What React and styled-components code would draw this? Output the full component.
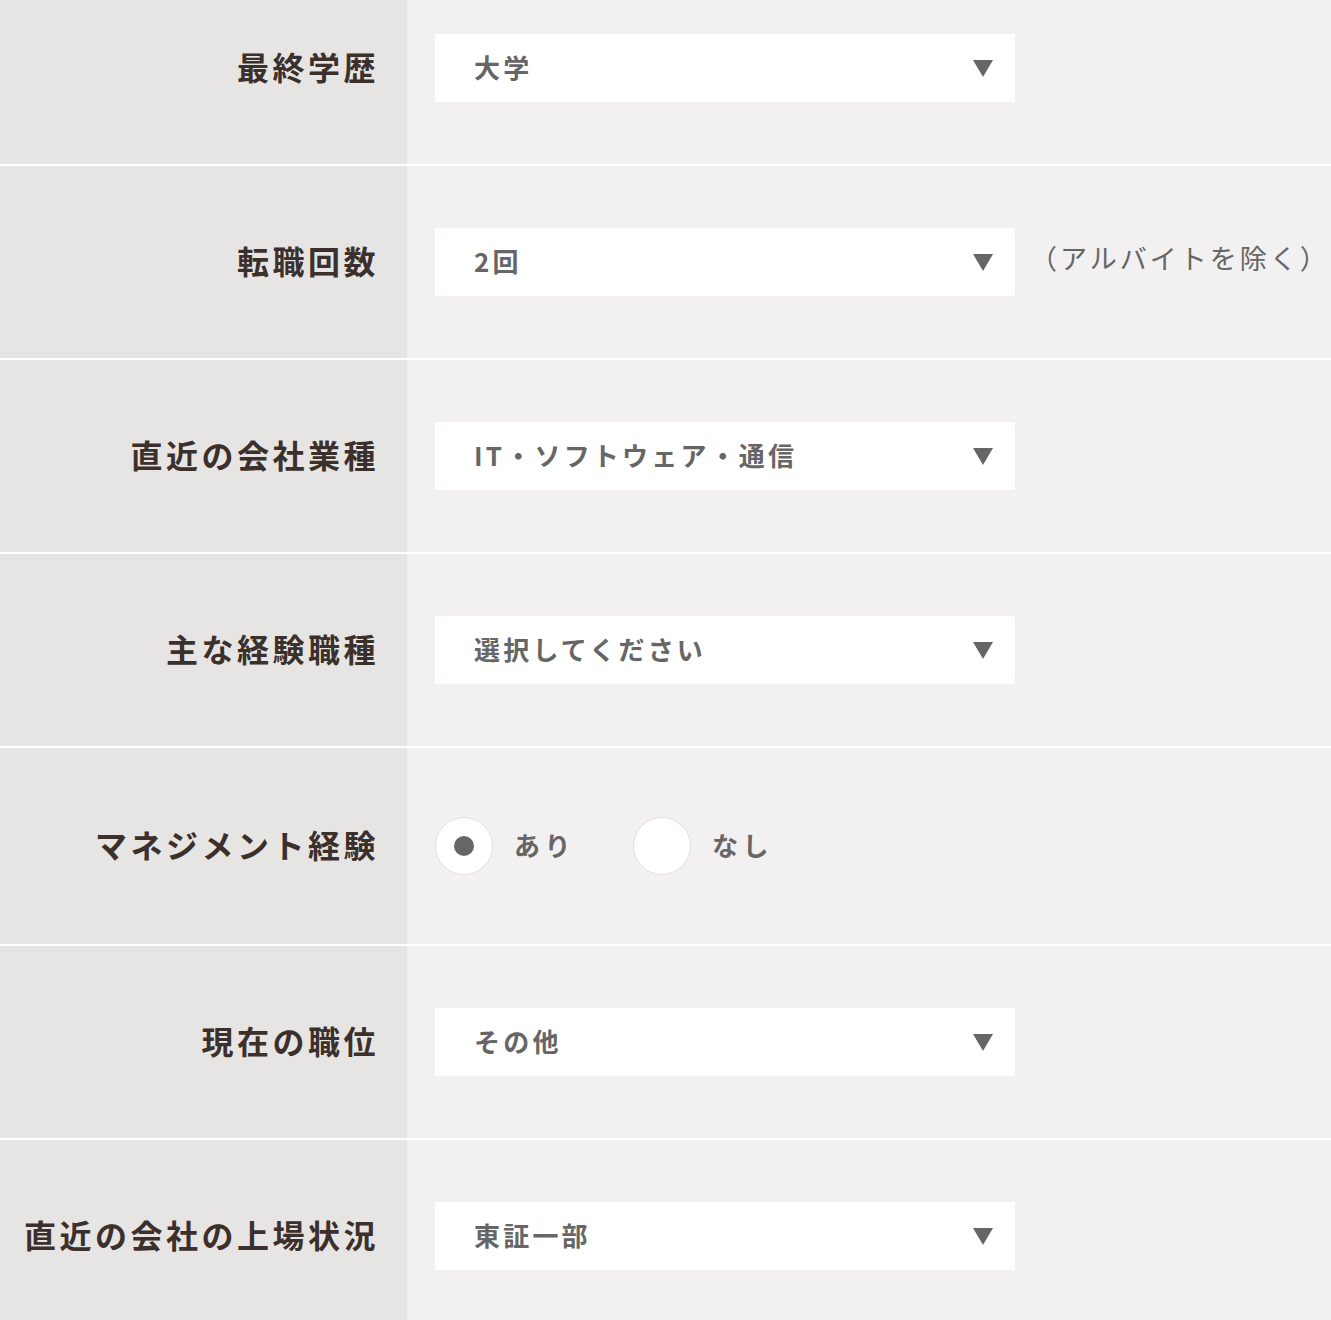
import React, { useState } from 'react'
import styled, { createGlobalStyle } from 'styled-components'

const GlobalStyle = createGlobalStyle`
  html, body {
    margin: 0;
    padding: 0;
    background: #f2f0f0;
    font-family: "Noto Sans CJK JP", "Noto Sans", sans-serif;
  }
`

const rows = [
  { label: '最終学歴', value: '大学', first: true },
  { label: '転職回数', value: '2回', note: '（アルバイトを除く）' },
  { label: '直近の会社業種', value: 'IT・ソフトウェア・通信' },
  { label: '主な経験職種', value: '選択してください' },
  { label: 'マネジメント経験', radio: ['あり', 'なし'] },
  { label: '現在の職位', value: 'その他' },
  { label: '直近の会社の上場状況', value: '東証一部' },
]

// padding for each kind of row: top / bottom
const pad = (p) => (p.$radio ? '69px 0 69px' : p.$first ? '34px 0 62px' : '62px 0 62px')

function Arrow() {
  return (
    <svg width="20" height="17" viewBox="0 0 20 17">
      <polygon points="0,0 20,0 10,17" fill="#666" />
    </svg>
  )
}

function App() {
  const [manage, SetManage] = useState('あり')
  return (
    <>
      <GlobalStyle />
      <Form>
        {rows.map((row) => (
          <Row key={row.label} $first={row.first}>
            <Label $first={row.first} $radio={!!row.radio}>
              <LabelText>{row.label}</LabelText>
            </Label>
            <Field $first={row.first} $radio={!!row.radio}>
              {row.radio ? (
                <RadioGroup>
                  {row.radio.map((opt) => (
                    <RadioItem key={opt} onClick={() => SetManage(opt)}>
                      <Circle>{manage === opt && <Dot />}</Circle>
                      <RadioText>{opt}</RadioText>
                    </RadioItem>
                  ))}
                </RadioGroup>
              ) : (
                <>
                  <Select>
                    <SelectText>{row.value}</SelectText>
                    <Arrow />
                  </Select>
                  {row.note && <Note>{row.note}</Note>}
                </>
              )}
            </Field>
          </Row>
        ))}
      </Form>
    </>
  )
}

const Form = styled.div`
  width: 100%;
  background: #f2f0f0;
`

const Row = styled.div`
  display: grid;
  grid-template-columns: 407px 1fr;
  border-top: ${(p) => (p.$first ? 'none' : '2px solid #fff')};
`

const Label = styled.div`
  background: #e7e5e3;
  display: flex;
  align-items: center;
  justify-content: flex-end;
  padding: ${pad};
  padding-right: 28px;
`

const LabelText = styled.span`
  font-size: 32px;
  font-weight: 700;
  letter-spacing: 3.5px;
  line-height: 1;
  color: #3b302c;
  white-space: nowrap;
  margin-top: -4px;
`

const Field = styled.div`
  display: flex;
  align-items: center;
  padding: ${pad};
  padding-left: 28px;
`

const Select = styled.div`
  width: 580px;
  height: 68px;
  background: #fff;
  display: flex;
  align-items: center;
  justify-content: space-between;
  padding: 0 22px 0 39px;
  box-sizing: border-box;
`

const SelectText = styled.span`
  font-size: 26px;
  font-weight: 700;
  letter-spacing: 3.2px;
  color: #666;
  line-height: 1;
  margin-top: -2px;
`

const Note = styled.span`
  margin-left: 15px;
  margin-top: -9px;
  font-size: 27px;
  font-weight: 400;
  letter-spacing: 3px;
  color: #666;
  white-space: nowrap;
`

const RadioGroup = styled.div`
  display: flex;
  align-items: center;
  gap: 58px;
`

const RadioItem = styled.label`
  display: flex;
  align-items: center;
  gap: 21px;
  cursor: pointer;
`

const Circle = styled.span`
  width: 58px;
  height: 58px;
  border-radius: 50%;
  background: #fff;
  border: 1px solid #e2e0e0;
  box-sizing: border-box;
  display: flex;
  align-items: center;
  justify-content: center;
`

const Dot = styled.span`
  width: 20px;
  height: 20px;
  border-radius: 50%;
  background: #666;
`

const RadioText = styled.span`
  font-size: 26px;
  font-weight: 700;
  letter-spacing: 4.5px;
  color: #666;
  line-height: 1;
  margin-top: -3px;
`

export default App
